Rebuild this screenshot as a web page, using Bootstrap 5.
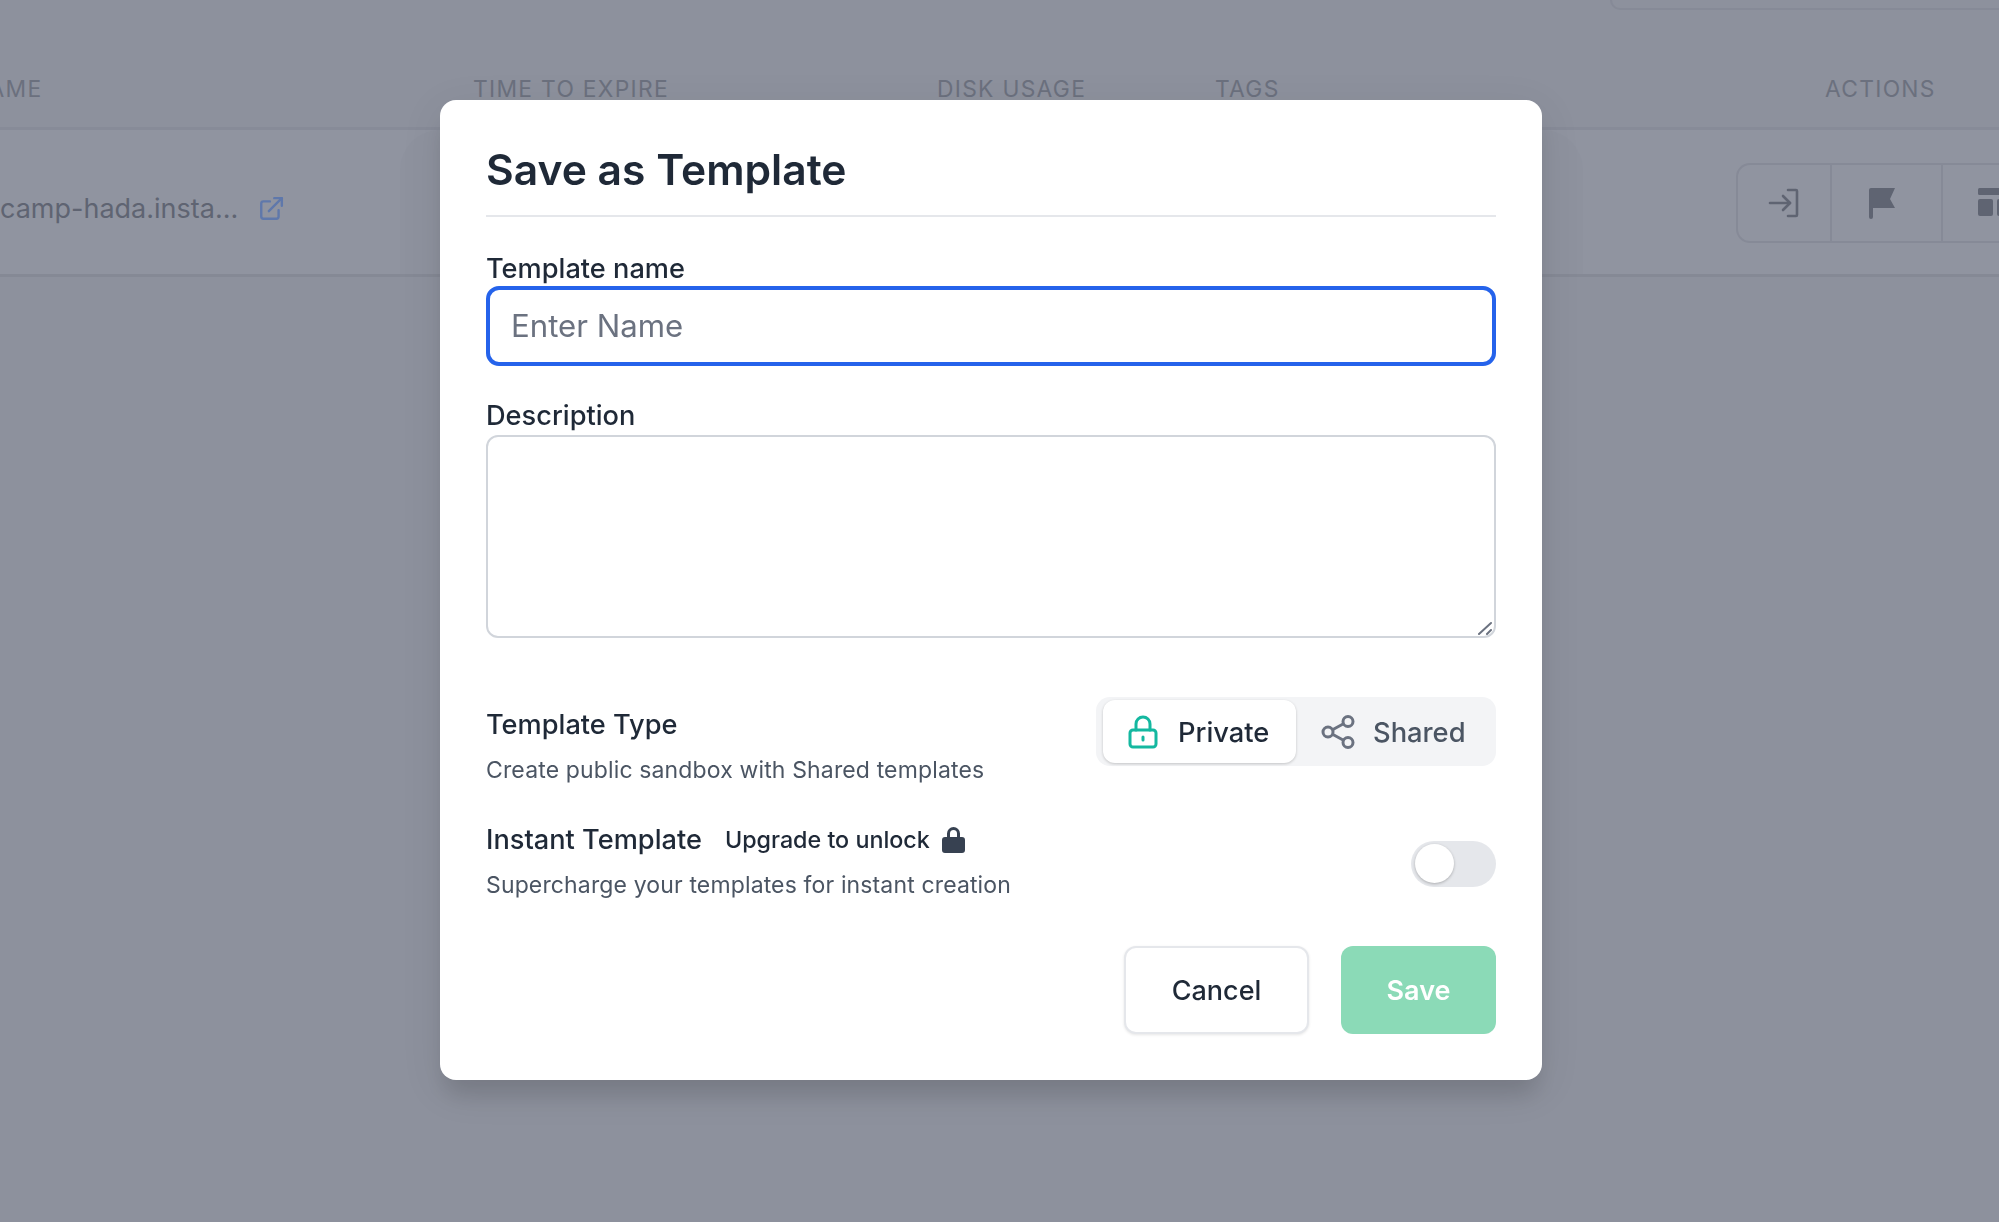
<!DOCTYPE html>
<html lang="en">
<head>
    <meta charset="UTF-8">
    <meta name="viewport" content="width=device-width, initial-scale=1.0">
    <title>Save as Template</title>
    <link href="https://cdn.jsdelivr.net/npm/bootstrap@5.3.0/dist/css/bootstrap.min.css" rel="stylesheet">
    <style>
        html, body { height: 100%; }
        body {
            background: #8d919d;
            font-family: Inter, "Liberation Sans", sans-serif;
            color: #1f2937;
            overflow: hidden;
        }

        /* table behind the dialog */
        .bg-search { height: 10px; margin-left: 1610px; border: 2px solid #868a97; border-top: 0; border-right: 0; border-radius: 0 0 0 12px; }
        .bg-cols { display: grid; grid-template-columns: 473px 464px 278px 610px 1fr; }
        .bg-head { height: 120px; padding-top: 63px; border-bottom: 3px solid #878b98; font-size: 22.8px; line-height: 32px; letter-spacing: 1.3px; color: #6b707e; }
        .bg-head-name { margin-left: -30px; white-space: nowrap; }
        .bg-row { position: relative; height: 147px; background: #9094a0; border-bottom: 3px solid #858995; }
        .bg-row-shade { position: absolute; left: 400px; top: 0; bottom: 0; width: 1183px; background: #8e929e; border-radius: 40px 40px 0 0; }
        .bg-row-name { display: flex; align-items: center; gap: 20px; font-size: 27px; color: #5f6472; height: 158px; white-space: nowrap; }
        .bg-link { width: 26px; height: 26px; color: #5f78ab; }
        .bg-actions { display: flex; height: 80px; margin: 33px 0 0 0; border: 2px solid #868a97; border-right: 0; border-radius: 14px 0 0 14px; width: 400px; grid-column: 5; margin-left: -89px; }
        .bg-act { display: flex; align-items: center; justify-content: center; border-right: 2px solid #868a97; color: #5f6472; }
        .bg-act svg { width: 32px; height: 32px; }
        .bg-act-1 { width: 94px; }
        .bg-act-2 { width: 111px; justify-content: flex-start; padding-left: 34px; }
        .bg-act-3 { justify-content: flex-start; padding-left: 35px; flex: 1; border-right: 0; }

        /* dialog */
        .tpl-modal { display: block; background: transparent; overflow: hidden; }
        .tpl-dialog { max-width: none; width: 1102px; margin: 100px 0 0 440px; }
        .tpl-content { height: 980px; padding: 0 46px; border: 0; border-radius: 16px; box-shadow: 0 20px 25px -5px rgba(0,0,0,.12), 0 10px 40px 5px rgba(0,0,0,.06); display: block; }
        .tpl-title { height: 117px; margin: 0; padding-top: 42px; font-size: 42.6px; line-height: 56px; font-weight: 600; color: #1f2937; border-bottom: 2px solid #e5e7eb; }
        .tpl-label { display: block; margin: 0; font-size: 27.2px; line-height: 36px; font-weight: 500; color: #1f2937; }
        .tpl-label-name { padding-top: 34px; height: 69px; }
        .tpl-label-desc { padding-top: 32px; height: 70px; }
        .tpl-input.form-control {
            height: 80px; padding: 0 21px; font-family: inherit; font-size: 31.2px; color: #1f2937;
            border: 4px solid #2563eb; border-radius: 13px; box-shadow: none;
        }
        .tpl-input.form-control::placeholder { color: #6b7280; opacity: 1; }
        .tpl-area-wrap { position: relative; height: 203px; margin-top: -1px; }
        .tpl-area.form-control { display: block; height: 203px; border: 2px solid #d1d5db; border-radius: 12px; resize: none; }
        .tpl-grip { position: absolute; right: 3px; bottom: 3px; width: 16px; height: 14px; color: #6b7280; pointer-events: none; }
        .tpl-opt-title { font-size: 27.2px; line-height: 36px; font-weight: 500; color: #1f2937; }
        .tpl-opt-sub { font-size: 23px; line-height: 32px; color: #4b5563; letter-spacing: .14px; margin-top: 11px; }
        .tpl-type { margin-top: 59px; height: 113px; }
        .tpl-type-text { padding-top: 10px; }
        .tpl-segment { width: 400px; height: 69px; padding: 3px 0 3px 7px; background: #f3f4f6; border-radius: 14px; }
        .tpl-seg-on, .tpl-seg-off { display: flex; align-items: center; font-size: 27.3px; font-weight: 500; }
        .tpl-seg-on span, .tpl-seg-off span { padding-top: 3px; }
        .tpl-seg-on { width: 193px; padding-left: 25px; gap: 20px; background: #fff; border-radius: 12px; box-shadow: 0 1px 3px rgba(0,0,0,.2); color: #1f2937; }
        .tpl-seg-off { padding-left: 25px; gap: 18px; color: #4b5563; }
        .tpl-seg-on svg { width: 30px; height: 34px; color: #14b8a0; }
        .tpl-seg-off svg { width: 34px; height: 34px; color: #6b7280; }
        .tpl-instant { margin-top: 12px; height: 110px; }
        .tpl-upgrade { display: inline-flex; align-items: center; gap: 12px; margin-left: 23px; font-size: 23.3px; font-weight: 500; color: #1f2937; }
        .tpl-upgrade svg { width: 23px; height: 27px; color: #374151; margin-top: -2px; }
        .tpl-toggle { width: 85px; height: 46px; margin-top: 19px; padding: 3px 0 0 4px; background: #e5e7eb; border-radius: 23px; }
        .tpl-knob { width: 39px; height: 39px; background: #fff; border-radius: 50%; box-shadow: 0 1px 3px rgba(0,0,0,.25); }
        .tpl-foot { margin-top: 14px; gap: 32px; }
        .tpl-btn.btn { height: 88px; padding: 2px 0 0; font-size: 27px; font-weight: 500; border-radius: 12px; }
        .tpl-cancel.btn { width: 185px; color: #1f2937; background: #fff; border: 2px solid #e5e7eb; box-shadow: 0 1px 3px rgba(0,0,0,.1); }
        .tpl-save.btn { width: 155px; color: #fff; background: #8bdab7; border: 0; opacity: 1; font-weight: 600; }
    </style>
</head>
<body>
    <!-- page under the dialog -->
    <div class="bg-search"></div>
    <div class="bg-head bg-cols">
        <div><div class="bg-head-name">NAME</div></div>
        <div>TIME TO EXPIRE</div>
        <div>DISK USAGE</div>
        <div>TAGS</div>
        <div>ACTIONS</div>
    </div>
    <div class="bg-row bg-cols">
        <div class="bg-row-shade"></div>
        <div class="bg-row-name">
            <span>camp-hada.insta...</span>
            <svg class="bg-link" viewBox="0 0 24 24" fill="none" stroke="currentColor" stroke-width="2.2" stroke-linecap="round" stroke-linejoin="round"><path d="M19 13v6a2 2 0 0 1-2 2H5a2 2 0 0 1-2-2V7a2 2 0 0 1 2-2h6"/><path d="M15 2h7v7"/><path d="M10 14 22 2"/></svg>
        </div>
        <div class="bg-actions">
            <div class="bg-act bg-act-1">
                <svg viewBox="0 0 32 32" fill="none" stroke="currentColor" stroke-width="2.6" stroke-linecap="round" stroke-linejoin="round"><path d="M2 16h20"/><path d="M15 9l7 7-7 7"/><path d="M20 3h8a1 1 0 0 1 1 1v24a1 1 0 0 1-1 1h-8"/></svg>
            </div>
            <div class="bg-act bg-act-2">
                <svg viewBox="0 0 32 32" fill="currentColor"><path d="M3 3a2 2 0 0 1 2-2h24l-5 11 5 9H7v9a2 2 0 0 1-4 0z"/></svg>
            </div>
            <div class="bg-act bg-act-3">
                <svg viewBox="0 0 32 32" fill="currentColor"><rect x="0" y="1" width="40" height="7" rx="1.5"/><rect x="0" y="12" width="15" height="17" rx="2"/><rect x="19" y="12" width="15" height="17" rx="2"/></svg>
            </div>
        </div>
    </div>

    <div class="modal tpl-modal">
        <div class="modal-dialog tpl-dialog">
            <div class="modal-content tpl-content">
                <h5 class="tpl-title">Save as Template</h5>
                <label class="tpl-label tpl-label-name" for="tplName">Template name</label>
                <input type="text" class="form-control tpl-input" id="tplName" placeholder="Enter Name">
                <label class="tpl-label tpl-label-desc" for="tplDesc">Description</label>
                <div class="tpl-area-wrap">
                    <textarea class="form-control tpl-area" id="tplDesc"></textarea>
                    <svg class="tpl-grip" viewBox="0 0 16 14" fill="none" stroke="currentColor" stroke-width="2" stroke-linecap="round"><path d="M2 13 14 2"/><path d="M10 13l4-4"/></svg>
                </div>

                <div class="d-flex justify-content-between tpl-type">
                    <div class="tpl-type-text">
                        <div class="tpl-opt-title">Template Type</div>
                        <div class="tpl-opt-sub">Create public sandbox with Shared templates</div>
                    </div>
                    <div class="d-flex tpl-segment">
                        <div class="tpl-seg-on">
                            <svg viewBox="0 0 30 34" fill="none" stroke="currentColor" stroke-width="3" stroke-linecap="round" stroke-linejoin="round"><rect x="2" y="15" width="26" height="17" rx="3"/><path d="M8 15V9a7 7 0 0 1 14 0v6"/><path d="M15 22v3"/></svg>
                            <span>Private</span>
                        </div>
                        <div class="tpl-seg-off">
                            <svg viewBox="0 0 34 34" fill="none" stroke="currentColor" stroke-width="3"><circle cx="7" cy="17" r="5"/><circle cx="27" cy="6.500" r="5"/><circle cx="27" cy="27.500" r="5"/><path d="M11.500 14.800 22.500 8.800M11.500 19.200l11 6"/></svg>
                            <span>Shared</span>
                        </div>
                    </div>
                </div>

                <div class="d-flex justify-content-between tpl-instant">
                    <div>
                        <div class="d-flex align-items-center">
                            <span class="tpl-opt-title">Instant Template</span>
                            <span class="tpl-upgrade">Upgrade to unlock
                                <svg viewBox="0 0 23 27" fill="currentColor"><path d="M5 11V7.500a6.500 6.500 0 0 1 13 0V11h2a3 3 0 0 1 3 3v10a3 3 0 0 1-3 3H3a3 3 0 0 1-3-3V14a3 3 0 0 1 3-3zm3 0h7V7.500a3.500 3.500 0 0 0-7 0z"/></svg>
                            </span>
                        </div>
                        <div class="tpl-opt-sub">Supercharge your templates for instant creation</div>
                    </div>
                    <div class="tpl-toggle"><div class="tpl-knob"></div></div>
                </div>

                <div class="d-flex justify-content-end tpl-foot">
                    <button type="button" class="btn tpl-btn tpl-cancel">Cancel</button>
                    <button type="button" class="btn tpl-btn tpl-save">Save</button>
                </div>
            </div>
        </div>
    </div>

    <script src="https://cdn.jsdelivr.net/npm/bootstrap@5.3.0/dist/js/bootstrap.bundle.min.js"></script>
</body>
</html>
